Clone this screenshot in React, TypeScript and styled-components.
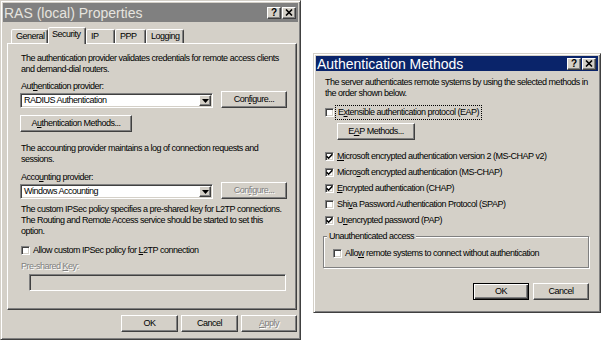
import React from 'react';
import styled, { createGlobalStyle, css } from 'styled-components';

const FACE = '#d4d0c8';

const GlobalStyle = createGlobalStyle`
  html, body {
    margin: 0;
    padding: 0;
    background: #fff;
  }
  body {
    font-family: "Liberation Sans", Arial, sans-serif;
    font-size: 9px;
    letter-spacing: -0.5px;
    color: #000;
  }
`;

const Desktop = styled.div`
  width: 602px;
  height: 349px;
  display: flex;
  align-items: flex-start;
  overflow: hidden;
`;

const Window = styled.div<{ $width: number; $height: number; $top: number; $left: number }>`
  box-sizing: border-box;
  flex-shrink: 0;
  width: ${p => p.$width}px;
  height: ${p => p.$height}px;
  margin-top: ${p => p.$top}px;
  margin-left: ${p => p.$left}px;
  background: ${FACE};
  border: 1px solid;
  border-color: ${FACE} #404040 #404040 ${FACE};
  box-shadow: inset 1px 1px #fff, inset -1px -1px #808080;
  padding: 2px;
  display: flex;
  flex-direction: column;
`;

const TitleBar = styled.div<{ $active?: boolean; $height: number }>`
  flex-shrink: 0;
  height: ${p => p.$height}px;
  background: ${p => (p.$active ? '#0a246a' : '#808080')};
  color: ${p => (p.$active ? '#fff' : '#e6e4df')};
  display: flex;
  align-items: center;
  justify-content: space-between;
  padding: 0 2px 0 1px;
  font-family: "Liberation Sans", Arial, sans-serif;
  font-size: 14px;
  letter-spacing: 0;
  white-space: nowrap;
`;

const TitleButtons = styled.div`
  display: flex;
  gap: 1px;
`;

const bevel = css`
  background: ${FACE};
  border: 1px solid;
  border-color: #fff #404040 #404040 #fff;
  box-shadow: inset -1px -1px #808080;
`;

const TitleButton = styled.div`
  box-sizing: border-box;
  width: 14px;
  height: 12px;
  ${bevel};
  display: flex;
  align-items: center;
  justify-content: center;
  color: #000;
  font-family: "Liberation Sans", Arial, sans-serif;
  font-weight: bold;
  font-size: 10px;
  line-height: 1;
`;

const LeftBody = styled.div`
  display: flex;
  flex-direction: column;
  padding-left: 4px;
`;

const TabStrip = styled.div`
  position: relative;
  z-index: 1;
  display: flex;
  align-items: flex-end;
  height: 17px;
  margin: 5px 0 -1px 4px;
`;

const Tab = styled.div<{ $width: number; $selected?: boolean }>`
  box-sizing: border-box;
  width: ${p => p.$width}px;
  height: ${p => (p.$selected ? 17 : 14)}px;
  margin-bottom: ${p => (p.$selected ? 0 : 1)}px;
  padding: ${p => (p.$selected ? '1px 0 0 3px' : '1px 0 0 4px')};
  background: ${FACE};
  border: 1px solid;
  border-bottom: none;
  border-color: #fff #404040 transparent #fff;
  border-radius: 2px 2px 0 0;
  box-shadow: inset -1px 0 #808080;
  line-height: 11px;
  white-space: nowrap;
`;

const TabPanel = styled.div`
  box-sizing: border-box;
  width: 290px;
  height: 267px;
  border: 1px solid;
  border-color: #fff #404040 #404040 #fff;
  box-shadow: inset -1px -1px #808080;
  padding: 9px 10px 0 13px;
  display: flex;
  flex-direction: column;
  align-items: flex-start;
`;

const disabledText = css`
  color: #808080;
  text-shadow: 1px 1px #fff;
`;

const Para = styled.p<{ $mt?: number; $disabled?: boolean }>`
  margin: ${p => p.$mt ?? 0}px 0 0;
  line-height: 11px;
  white-space: nowrap;
  ${p => p.$disabled && disabledText};
`;

const Key = styled.span`
  text-decoration: underline;
`;

const ProviderRow = styled.div<{ $mt: number }>`
  display: flex;
  align-items: flex-end;
  margin-top: ${p => p.$mt}px;
`;

const ProviderField = styled.div`
  display: flex;
  flex-direction: column;
  gap: 1px;
`;

const Select = styled.div<{ $width: number }>`
  box-sizing: border-box;
  width: ${p => p.$width}px;
  height: 15px;
  margin-left: -1px;
  background: #fff;
  border: 1px solid;
  border-color: #808080 #fff #fff #808080;
  box-shadow: inset 1px 1px #404040, inset -1px -1px ${FACE};
  display: flex;
  align-items: center;
  justify-content: space-between;
  padding: 1px 1px 1px 3px;
`;

const SelectValue = styled.span`
  line-height: 11px;
  white-space: nowrap;
`;

const DropButton = styled.div`
  box-sizing: border-box;
  width: 12px;
  height: 11px;
  ${bevel};
  display: flex;
  align-items: center;
  justify-content: center;
`;

const Button = styled.button<{ $width: number; $ml?: number; $mt?: number; $default?: boolean; $disabled?: boolean }>`
  box-sizing: border-box;
  flex-shrink: 0;
  width: ${p => p.$width}px;
  height: 17px;
  margin: ${p => p.$mt ?? 0}px 0 0 ${p => p.$ml ?? 0}px;
  padding: 0;
  font: inherit;
  letter-spacing: inherit;
  color: #000;
  line-height: 11px;
  ${bevel};
  box-shadow: inset -1px -1px #808080, inset 1px 1px ${FACE};
  display: flex;
  align-items: center;
  justify-content: center;
  white-space: nowrap;
  ${p =>
    p.$default &&
    css`
      border-color: #000;
      box-shadow: inset 1px 1px #fff, inset -1px -1px #404040, inset -2px -2px #808080;
    `}
  ${p => p.$disabled && disabledText};
`;

const CheckRow = styled.div<{ $mt?: number; $height?: number }>`
  display: flex;
  align-items: center;
  gap: 3px;
  height: ${p => p.$height ?? 11}px;
  margin-top: ${p => p.$mt ?? 0}px;
  line-height: 11px;
  white-space: nowrap;
`;

const CheckBox = styled.span`
  box-sizing: border-box;
  flex-shrink: 0;
  width: 9px;
  height: 9px;
  background: #fff;
  border: 1px solid;
  border-color: #808080 #fff #fff #808080;
  box-shadow: inset 1px 1px #404040, inset -1px -1px ${FACE};
  display: flex;
  align-items: center;
  justify-content: center;
`;

const FocusLabel = styled.span`
  padding: 0 1px;
  outline: 1px dotted #000;
  outline-offset: 1px;
`;

const TextInput = styled.div`
  box-sizing: border-box;
  width: 257px;
  height: 17px;
  margin: 2px 0 0 8px;
  background: ${FACE};
  border: 1px solid;
  border-color: #808080 #fff #fff #808080;
  box-shadow: inset 1px 1px #404040, inset -1px -1px ${FACE};
`;

const ButtonBar = styled.div<{ $mt: number; $gap: number }>`
  display: flex;
  justify-content: flex-end;
  gap: ${p => p.$gap}px;
  margin-top: ${p => p.$mt}px;
  padding-right: 1px;
`;

const RightBody = styled.div`
  display: flex;
  flex-direction: column;
  align-items: flex-start;
  padding: 0 9px;
`;

const MethodList = styled.div`
  display: flex;
  flex-direction: column;
  align-items: flex-start;
  margin-top: 8px;
`;

const GroupBox = styled.fieldset`
  box-sizing: border-box;
  width: 266px;
  margin: 3px 0 0 -2px;
  padding: 6px 9px 8px;
  border: 1px solid #808080;
  box-shadow: inset 1px 1px #fff, 1px 1px #fff;
  min-inline-size: auto;
`;

const GroupLegend = styled.legend`
  margin-left: -6px;
  padding: 0 2px;
  background: ${FACE};
  line-height: 11px;
`;

const FullButtonBar = styled(ButtonBar)`
  align-self: stretch;
  padding-right: 0;
`;

const Check = () => (
  <svg width="7" height="7" viewBox="0 0 7 7">
    <path d="M0.6 3.2 L2.6 5.2 L6.4 1.2" stroke="#000" strokeWidth="1.6" fill="none" />
  </svg>
);

const CloseGlyph = () => (
  <svg width="8" height="7" viewBox="0 0 8 7">
    <path d="M1 0.5 L7 6.5 M7 0.5 L1 6.5" stroke="#000" strokeWidth="1.6" fill="none" />
  </svg>
);

const DropArrow = () => (
  <svg width="7" height="4" viewBox="0 0 7 4">
    <polygon points="0,0 7,0 3.5,4" fill="#000" />
  </svg>
);

const WindowTitle = ({ title, active, height }: { title: string; active?: boolean; height: number }) => (
  <TitleBar $active={active} $height={height}>
    <span>{title}</span>
    <TitleButtons>
      <TitleButton>?</TitleButton>
      <TitleButton>
        <CloseGlyph />
      </TitleButton>
    </TitleButtons>
  </TitleBar>
);

type Method = { label: React.ReactNode; checked: boolean };

const methods: Method[] = [
  { label: <><Key>M</Key>icrosoft encrypted authentication version 2 (MS-CHAP v2)</>, checked: true },
  { label: <>Micro<Key>s</Key>oft encrypted authentication (MS-CHAP)</>, checked: true },
  { label: <><Key>E</Key>ncrypted authentication (CHAP)</>, checked: true },
  { label: <>Shi<Key>v</Key>a Password Authentication Protocol (SPAP)</>, checked: false },
  { label: <>U<Key>n</Key>encrypted password (PAP)</>, checked: true },
];

const tabs = [
  { name: 'General', width: 37 },
  { name: 'Security', width: 38, selected: true },
  { name: 'IP', width: 29 },
  { name: 'PPP', width: 31 },
  { name: 'Logging', width: 38 },
];

const PropertiesWindow = () => (
  <Window $width={301} $height={340} $top={0} $left={0}>
    <WindowTitle title="RAS (local) Properties" height={19} />
    <LeftBody>
      <TabStrip>
        {tabs.map(t => (
          <Tab key={t.name} $width={t.width} $selected={t.selected}>
            {t.name}
          </Tab>
        ))}
      </TabStrip>
      <TabPanel>
        <Para>
          The authentication provider validates credentials for remote access clients
          <br />
          and demand-dial routers.
        </Para>
        <ProviderRow $mt={6}>
          <ProviderField>
            <Para>
              Aut<Key>h</Key>entication provider:
            </Para>
            <Select $width={193}>
              <SelectValue>RADIUS Authentication</SelectValue>
              <DropButton>
                <DropArrow />
              </DropButton>
            </Select>
          </ProviderField>
          <Button $width={66} $ml={8}>
            Con<Key>f</Key>igure...
          </Button>
        </ProviderRow>
        <Button $width={112} $mt={7} $ml={-1}>
          A<Key>u</Key>thentication Methods...
        </Button>
        <Para $mt={11}>
          The accounting provider maintains a log of connection requests and
          <br />
          sessions.
        </Para>
        <ProviderRow $mt={7}>
          <ProviderField>
            <Para>
              Acco<Key>u</Key>nting provider:
            </Para>
            <Select $width={193}>
              <SelectValue>Windows Accounting</SelectValue>
              <DropButton>
                <DropArrow />
              </DropButton>
            </Select>
          </ProviderField>
          <Button $width={66} $ml={8} $disabled>
            Con<Key>f</Key>igure...
          </Button>
        </ProviderRow>
        <Para $mt={5}>
          The custom IPSec policy specifies a pre-shared key for L2TP connections.
          <br />
          The Routing and Remote Access service should be started to set this
          <br />
          option.
        </Para>
        <CheckRow $mt={8}>
          <CheckBox />
          <span>
            Allow custom IPSec policy for <Key>L</Key>2TP connection
          </span>
        </CheckRow>
        <Para $mt={5} $disabled>
          Pre-shared <Key>K</Key>ey:
        </Para>
        <TextInput />
      </TabPanel>
      <ButtonBar $mt={5} $gap={3}>
        <Button $width={57}>OK</Button>
        <Button $width={57}>Cancel</Button>
        <Button $width={56} $disabled>
          <span>
            <Key>A</Key>pply
          </span>
        </Button>
      </ButtonBar>
    </LeftBody>
  </Window>
);

const AuthMethodsWindow = () => (
  <Window $width={288} $height={260} $top={53} $left={12}>
    <WindowTitle title="Authentication Methods" active height={15} />
    <RightBody>
      <Para $mt={6}>
        The server authenticates remote systems by using the selected methods in
        <br />
        the order shown below.
      </Para>
      <CheckRow $mt={8}>
        <CheckBox />
        <FocusLabel>
          E<Key>x</Key>tensible authentication protocol (EAP)
        </FocusLabel>
      </CheckRow>
      <Button $width={78} $ml={12} $mt={5}>
        E<Key>A</Key>P Methods...
      </Button>
      <MethodList>
        {methods.map((m, i) => (
          <CheckRow key={i} $height={16}>
            <CheckBox>{m.checked && <Check />}</CheckBox>
            <span>{m.label}</span>
          </CheckRow>
        ))}
      </MethodList>
      <GroupBox>
        <GroupLegend>Unauthenticated access</GroupLegend>
        <CheckRow>
          <CheckBox />
          <span>
            Allo<Key>w</Key> remote systems to connect without authentication
          </span>
        </CheckRow>
      </GroupBox>
      <FullButtonBar $mt={15} $gap={4}>
        <Button $width={56} $default>
          OK
        </Button>
        <Button $width={56}>Cancel</Button>
      </FullButtonBar>
    </RightBody>
  </Window>
);

export default function App() {
  return (
    <>
      <GlobalStyle />
      <Desktop>
        <PropertiesWindow />
        <AuthMethodsWindow />
      </Desktop>
    </>
  );
}
